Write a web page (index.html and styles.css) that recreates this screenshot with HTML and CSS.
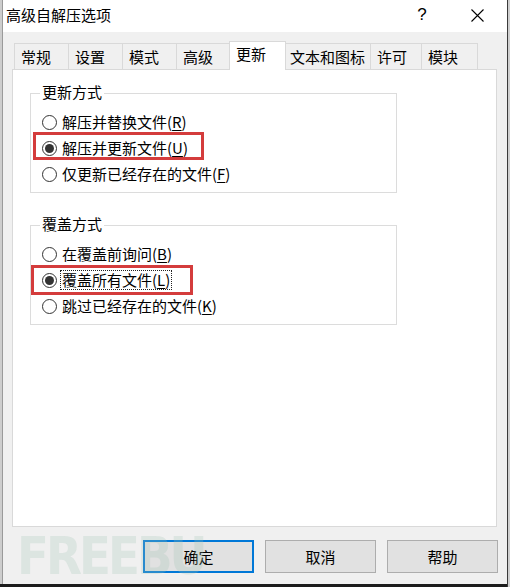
FILE: index.html
```html
<!DOCTYPE html>
<html lang="zh-CN">
<head>
<meta charset="utf-8">
<title>高级自解压选项</title>
<link rel="stylesheet" href="styles.css">
</head>
<body>
<div class="screen">
  <div class="edge-left"></div>
  <div class="dialog">
    <div class="titlebar">
      <span class="title">高级自解压选项</span>
      <span class="help">?</span>
      <span class="close">
        <svg width="13" height="13" viewBox="0 0 13 13"><path d="M0.5 0.5 L12.5 12.5 M12.5 0.5 L0.5 12.5" stroke="#000" stroke-width="1.1" fill="none"/></svg>
      </span>
    </div>
    <div class="content">
      <div class="tabs">
        <div class="tab">常规</div>
        <div class="tab">设置</div>
        <div class="tab">模式</div>
        <div class="tab">高级</div>
        <div class="tab active">更新</div>
        <div class="tab wide">文本和图标</div>
        <div class="tab narrow">许可</div>
        <div class="tab last">模块</div>
      </div>
      <div class="panel">
        <div class="group">
          <div class="group-title">更新方式</div>
          <div class="rows">
            <div class="row"><span class="radio"></span><span class="label">解压并替换文件(<u>R</u>)</span></div>
            <div class="row"><span class="radio checked"></span><span class="label">解压并更新文件(<u>U</u>)</span><span class="mark mark-a"></span></div>
            <div class="row"><span class="radio"></span><span class="label">仅更新已经存在的文件(<u>F</u>)</span></div>
          </div>
        </div>
        <div class="group second">
          <div class="group-title">覆盖方式</div>
          <div class="rows">
            <div class="row"><span class="radio"></span><span class="label">在覆盖前询问(<u>B</u>)</span></div>
            <div class="row"><span class="radio checked"></span><span class="label focus">覆盖所有文件(<u>L</u>)</span><span class="mark mark-b"></span></div>
            <div class="row"><span class="radio"></span><span class="label">跳过已经存在的文件(<u>K</u>)</span></div>
          </div>
        </div>
      </div>
      <div class="buttons">
        <button class="btn default">确定</button>
        <button class="btn">取消</button>
        <button class="btn">帮助</button>
      </div>
    </div>
    <div class="watermark">FREEBU</div>
  </div>
  <div class="edge-right"></div>
</div>
</body>
</html>
```
FILE: styles.css
```css
* { box-sizing: border-box; }
html, body { margin: 0; padding: 0; }
body {
  width: 510px;
  height: 587px;
  overflow: hidden;
  background: #1c1c1c;
  font-family: "Noto Sans CJK SC", "Microsoft YaHei", sans-serif;
  font-size: 15px;
  color: #000;
}
.screen {
  display: flex;
  height: 587px;
  align-items: flex-start;
}
.edge-left {
  width: 3px;
  height: 584px;
  background: #cdcdcd;
  border-right: 1px solid #9a9a9a;
}
.edge-right {
  width: 3px;
  height: 587px;
  background: #cfcfcf;
  border-left: 1px solid #3a3a3a;
}
.dialog {
  position: relative;
  width: 504px;
  height: 584px;
  background: #f0f0f0;
  display: flex;
  flex-direction: column;
  overflow: hidden;
}
.titlebar {
  height: 32px;
  background: #fff;
  display: flex;
  align-items: center;
  padding-left: 3px;
}
.title {
  flex: 1;
  line-height: 20px;
  margin-top: -2px;
}
.help {
  width: 14px;
  text-align: center;
  margin-right: 25px;
  font-family: "Liberation Sans", Arial, sans-serif;
  font-size: 17px;
  line-height: 20px;
  margin-top: -2px;
}
.close {
  width: 46px;
  margin-right: 7px;
  display: flex;
  justify-content: center;
  margin-top: -2px;
}
.close svg { display: block; }
.content {
  padding: 9px 11px 0 9px;
  display: flex;
  flex-direction: column;
}
.tabs {
  display: flex;
  align-items: flex-end;
  height: 28px;
  padding-left: 2px;
  position: relative;
  z-index: 1;
}
.tab {
  height: 26px;
  min-width: 55px;
  margin-right: -1px;
  padding: 0 5px 0 6px;
  border: 1px solid #d9d9d9;
  border-bottom: none;
  background: #f0f0f0;
  line-height: 26px;
  white-space: nowrap;
}
.tab.wide { min-width: 86px; padding: 0 4px 0 4px; }
.tab.narrow { min-width: 52px; }
.tab.last { min-width: 57px; }
.tab.active {
  height: 29px;
  min-width: 57px;
  margin-left: -1px;
  margin-bottom: -1px;
  background: #fff;
  line-height: 24px;
  position: relative;
  z-index: 2;
}
.panel {
  height: 458px;
  width: 485px;
  background: #fff;
  border: 1px solid #d9d9d9;
  padding: 23px 0 0 17px;
}
.group {
  width: 367px;
  border: 1px solid #dcdcdc;
  padding: 0 10px 5px 11px;
}
.group.second { margin-top: 32px; }
.group-title {
  width: max-content;
  margin-top: -11px;
  margin-left: -2px;
  padding: 0 2px;
  background: #fff;
  line-height: 18px;
}
.rows { margin-top: 8px; }
.row {
  position: relative;
  height: 26px;
  display: flex;
  align-items: center;
  gap: 5px;
  white-space: nowrap;
}
.radio {
  width: 15px;
  height: 15px;
  border: 1px solid #333;
  border-radius: 50%;
  background: #fff;
  display: flex;
  align-items: center;
  justify-content: center;
  flex: none;
}
.radio.checked::after {
  content: "";
  width: 9px;
  height: 9px;
  border-radius: 50%;
  background: #333;
}
.label { line-height: 18px; }
.label u { text-decoration-thickness: 1px; text-underline-offset: 2px; }
.label.focus {
  outline: 1px dotted #222;
  padding: 0 1px;
  margin-left: -1px;
}
.mark {
  position: absolute;
  border: 3px solid #d43c3c;
  pointer-events: none;
}
.mark-a { left: -9px; top: -3px; width: 171px; height: 28px; }
.mark-b { left: -11px; top: -2px; width: 162px; height: 30px; }
.buttons {
  margin-top: 13px;
  margin-right: -2px;
  display: flex;
  justify-content: flex-end;
  gap: 11px;
}
.btn {
  width: 111px;
  height: 33px;
  background: #e1e1e1;
  border: 1px solid #adadad;
  font-family: inherit;
  font-size: 15px;
  color: #000;
  padding: 0;
  line-height: 20px;
}
.btn.default {
  border: 2px solid #0078d7;
}
.watermark {
  position: absolute;
  left: 14px;
  top: 530px;
  width: max-content;
  font-family: "DejaVu Sans Condensed", "DejaVu Sans", sans-serif;
  font-stretch: condensed;
  font-weight: bold;
  font-size: 52px;
  line-height: 52px;
  letter-spacing: -3px;
  color: rgba(160, 195, 178, 0.25);
  pointer-events: none;
}
```
